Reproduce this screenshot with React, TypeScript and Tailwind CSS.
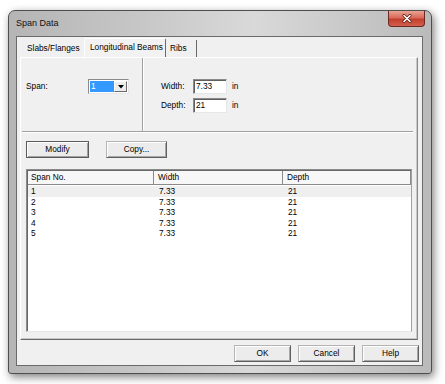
import React from "react";

function Btn({ label, w, def = false, ml = 0 }: { label: string; w: number; def?: boolean; ml?: number }) {
  return (
    <div
      className={
        "h-[17px] flex items-center justify-center bg-[#ececec] text-[8.3px] leading-none text-black border " +
        (def
          ? "border-[#5a5a5a] shadow-[inset_1px_1px_0_#ffffff,inset_-1px_-1px_0_#a0a0a0]"
          : "border-t-[#b4b4b4] border-l-[#b4b4b4] border-r-[#5f5f5f] border-b-[#5f5f5f] shadow-[inset_1px_1px_0_#ffffff,inset_-1px_-1px_0_#a8a8a8]")
      }
      style={{ width: w, marginLeft: ml }}
    >
      {label}
    </div>
  );
}

export default function App() {
  const rows = ["1", "2", "3", "4", "5"];
  return (
    <div className="w-[445px] h-[384px] bg-white pt-[10px] pl-[8px] overflow-hidden font-['Liberation_Sans',Arial,sans-serif] text-black">
      <div className="w-[424px] h-[364px] flex flex-col rounded-t-[7px] rounded-b-[3px] border border-[#4e4e4e] shadow-[2px_3px_8px_rgba(0,0,0,0.5)] bg-[linear-gradient(90deg,#b5b5b5_0%,#c6c6c6_30%,#d9d9d9_58%,#c9c9c9_80%,#bababa_100%)]">
        {/* title bar */}
        <div className="h-[25px] shrink-0 flex justify-between">
          <span className="pl-[7px] pt-[7px] text-[9px] leading-[11px] text-[#111]">Span Data</span>
          <div className="mr-[6px] w-[37px] h-[16px] rounded-b-[4px] border border-t-0 border-[#6e2a22] bg-[linear-gradient(180deg,#eaa394_0%,#d86a58_45%,#c23f2e_55%,#d2604c_100%)] flex items-center justify-center">
            <svg width="10" height="9" viewBox="0 0 10 9">
              <path d="M2 1.5 L8 7.5 M8 1.5 L2 7.5" stroke="#5a1a12" strokeWidth="3" strokeLinecap="round" />
              <path d="M2 1.5 L8 7.5 M8 1.5 L2 7.5" stroke="#ffffff" strokeWidth="1.6" strokeLinecap="round" />
            </svg>
          </div>
        </div>
        {/* client */}
        <div className="ml-[7px] w-[407px] h-[330px] border border-[#6a6a6a] bg-[#f0f0f0] flex flex-col text-[8.3px] leading-none">
          {/* tabs */}
          <div className="h-[20px] pl-[3px] flex items-end">
            <div className="h-[17px] w-[64px] flex items-center pl-[7px] pb-[1px]">Slabs/Flanges</div>
            <div className="h-[19px] w-[82px] flex items-center pl-[5px] pb-[2px] bg-[#f2f2f2] border-t border-l border-t-white border-l-white border-r border-r-[#696969] rounded-t-[2px]">
              Longitudinal Beams
            </div>
            <div className="h-[17px] w-[31px] flex items-center pl-[4px] pb-[1px] border-r border-r-[#696969]">Ribs</div>
          </div>
          {/* tab panel */}
          <div className="ml-[3px] w-[398px] h-[283px] border border-l-white border-t-white border-r-[#8a8a8a] border-b-[#696969] shadow-[inset_-1px_-1px_0_#c8c8c8] flex flex-col">
            {/* top section */}
            <div className="h-[73px] flex">
              <div className="w-[121px] pt-[21px] flex items-start">
                <div className="w-[67px] pl-[5px] h-[15px] flex items-center">Span:</div>
                <div className="w-[41px] h-[15px] bg-white border border-t-[#8a8a8a] border-l-[#8a8a8a] border-r-[#e6e6e6] border-b-[#e6e6e6] flex p-[1px]">
                  <div className="flex-1 bg-[#3399ff] text-white flex items-center pl-[1px]">1</div>
                  <div className="w-[13px] bg-[#ececec] border border-t-white border-l-white border-r-[#696969] border-b-[#696969] flex items-center justify-center">
                    <svg width="6" height="4" viewBox="0 0 6 4">
                      <path d="M0 0 H6 L3 3.5 Z" fill="#000" />
                    </svg>
                  </div>
                </div>
              </div>
              <div className="w-[2px] border-l border-l-[#a0a0a0] border-r border-r-white" />
              <div className="flex-1 pt-[21px] pl-[17px] flex flex-col gap-[4px]">
                {[
                  ["Width:", "7.33"],
                  ["Depth:", "21"],
                ].map(([l, v]) => (
                  <div key={l} className="h-[15px] flex items-center">
                    <div className="w-[32px]">{l}</div>
                    <div className="w-[34px] h-[15px] bg-white border border-t-[#8a8a8a] border-l-[#8a8a8a] border-r-[#e6e6e6] border-b-[#e6e6e6] shadow-[inset_1px_1px_0_#5f5f5f] flex items-center pl-[2px]">
                      {v}
                    </div>
                    <div className="ml-[5px]">in</div>
                  </div>
                ))}
              </div>
            </div>
            {/* horizontal separator */}
            <div className="ml-[1px] w-[391px] h-[2px] border-t border-t-[#a0a0a0] border-b border-b-white" />
            {/* buttons */}
            <div className="mt-[8px] pl-[5px] flex">
              <Btn label="Modify" w={63} def />
              <Btn label="Copy..." w={61} ml={17} />
            </div>
            {/* listview */}
            <div className="mt-[11px] ml-[5px] w-[386px] h-[163px] bg-white border border-t-[#8a8a8a] border-l-[#8a8a8a] border-r-[#a0a0a0] border-b-[#e6e6e6] shadow-[inset_1px_1px_0_#696969] pl-[1px] pt-[1px] flex flex-col">
              <div className="h-[14px] flex bg-[#f7f7f7] border-b border-b-[#8a8a8a]">
                <div className="w-[126px] pl-[3px] flex items-center border-r border-r-[#8a8a8a]">Span No.</div>
                <div className="w-[129px] pl-[4px] flex items-center border-r border-r-[#8a8a8a]">Width</div>
                <div className="w-[128px] pl-[4px] flex items-center border-r border-r-[#8a8a8a]">Depth</div>
              </div>
              <div className="pt-[1px] flex flex-col">
                {rows.map((r, i) => (
                  <div key={r} className={"h-[10.5px] flex items-center " + (i === 0 ? "bg-[#efefef]" : "")}>
                    <div className="w-[126px] pl-[3px]">{r}</div>
                    <div className="w-[129px] pl-[5px]">7.33</div>
                    <div className="w-[128px] pl-[5px]">21</div>
                  </div>
                ))}
              </div>
            </div>
          </div>
          {/* bottom buttons */}
          <div className="mt-[5px] pr-[3px] flex justify-end">
            <Btn label="OK" w={57} />
            <Btn label="Cancel" w={57} ml={7} />
            <Btn label="Help" w={57} ml={7} />
          </div>
        </div>
      </div>
    </div>
  );
}
